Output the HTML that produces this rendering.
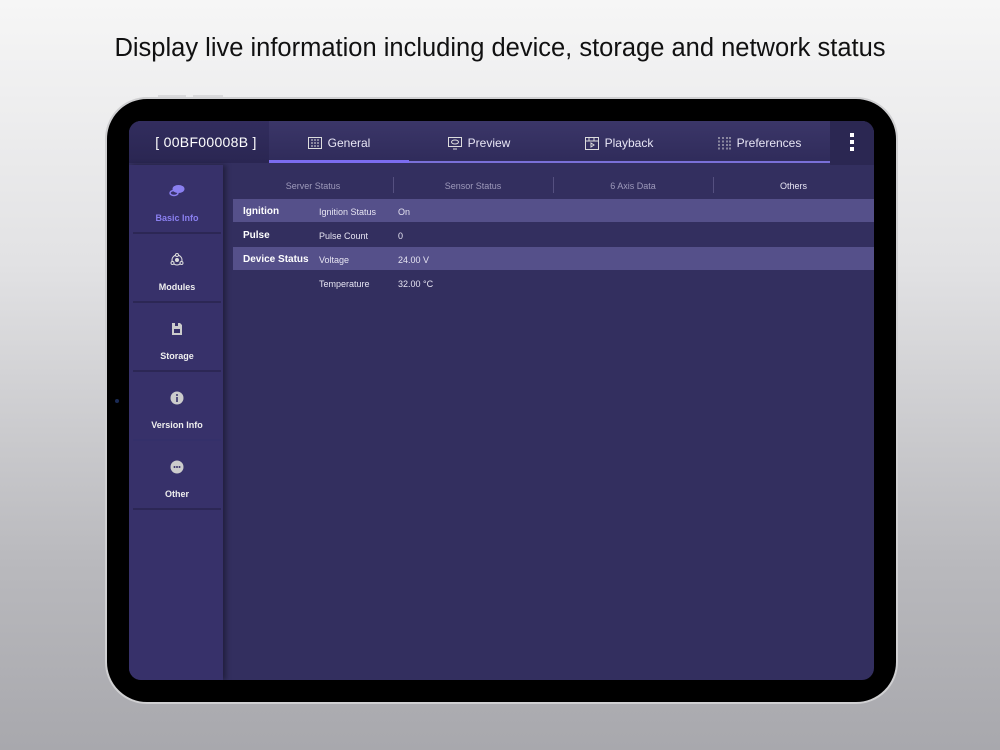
<!DOCTYPE html>
<html><head><meta charset="utf-8"><style>
*{margin:0;padding:0;box-sizing:border-box}
body{width:1000px;height:750px;overflow:hidden;background:linear-gradient(#f6f6f6 0%,#e2e2e4 35%,#b9b9bd 75%,#a8a8ad 100%);font-family:"Liberation Sans",sans-serif;position:relative}
.title{position:absolute;top:34px;left:0;width:1000px;text-align:center;font-size:25.5px;color:#111}
.dev{position:absolute;left:105px;top:97px;width:793px;height:607px;border-radius:42px;background:#000;border:2px solid #d0d0d2}
.btn{position:absolute;top:95px;height:2px;background:#dadadc}
.scr{position:absolute;left:129px;top:121px;width:745px;height:559px;border-radius:12px;overflow:hidden;background:#332f5f}
.hdr{position:absolute;left:0;top:0;width:745px;height:42px;background:linear-gradient(#3b3668,#2f2b5a)}
.id{position:absolute;left:0;top:0;width:140px;height:42px;background:linear-gradient(#322d5e,#2a2652);color:#fff;font-size:14px;padding-left:14px;text-align:center;line-height:43px;letter-spacing:.3px}
.tab{position:absolute;top:1px;height:42px;color:#e8e6f5;font-size:12px;display:flex;align-items:center;justify-content:center;gap:6px}
.ul{position:absolute;top:40px;height:2px;background:#8a7ff0}
.menu{position:absolute;left:701px;top:0;width:44px;height:44px;background:#2b2752}
.menu i{position:absolute;left:20px;width:4px;height:4px;background:#fff}
.side{position:absolute;left:0;top:44px;width:94px;height:515px;background:#37316a;box-shadow:3px 0 5px rgba(0,0,0,.35)}
.it{position:absolute;left:4px;width:88px;height:69px;border-bottom:2px solid #2c2755;text-align:center;color:#eee;font-size:9px;font-weight:bold}
.it .ic{position:absolute;top:18px;left:36px;width:16px;height:16px}
.it span{position:absolute;left:0;width:88px;top:48px}
.sub{position:absolute;top:53px;height:24px;line-height:24px;font-size:9px;color:#9e9abb;text-align:center}
.sep{position:absolute;top:56px;width:1px;height:16px;background:#555080}
.row{position:absolute;left:104px;width:641px;height:23px;font-size:9px;color:#e6e4f2;line-height:26px}
.row.h{background:#55508a}
.row b{position:absolute;left:10px;font-size:10px;color:#fff}
.row .k{position:absolute;left:86px}
.row .v{position:absolute;left:165px}
</style></head><body>
<div class="title">Display live information including device, storage and network status</div>
<div class="btn" style="left:158px;width:28px"></div><div class="btn" style="left:193px;width:30px"></div>
<div class="dev"></div>
<div style="position:absolute;left:115px;top:399px;width:4px;height:4px;border-radius:2px;background:#1a2a55"></div>
<div class="scr">
<div class="hdr"></div>
<div class="id">[ 00BF00008B ]</div>
<div class="tab" style="left:140px;width:140px"><svg width="14" height="12" viewBox="0 0 14 12"><rect x=".5" y=".5" width="13" height="11" fill="none" stroke="#ddd"/><path d="M3 3h8M3 6h8M3 9h8" stroke="#ddd" stroke-dasharray="2 1"/></svg>General</div>
<div class="tab" style="left:280px;width:140px"><svg width="14" height="13" viewBox="0 0 14 13"><rect x=".5" y=".5" width="13" height="9" fill="none" stroke="#ddd"/><ellipse cx="7" cy="5" rx="3.5" ry="2" fill="none" stroke="#ddd"/><path d="M5 12h4" stroke="#ddd"/></svg>Preview</div>
<div class="tab" style="left:420px;width:140px"><svg width="14" height="13" viewBox="0 0 14 13"><rect x=".5" y=".5" width="13" height="12" fill="none" stroke="#ddd"/><path d="M.5 4h13M4 .5v3.5M9 .5v3.5M6 6v4l3-2z" stroke="#ddd" fill="none"/></svg>Playback</div>
<div class="tab" style="left:560px;width:140px"><svg width="14" height="13" viewBox="0 0 14 13"><path d="M2 0v13M6 0v13M10 0v13M13 0v13" stroke="#ddd" stroke-dasharray="2 1.5"/></svg>Preferences</div>
<div class="ul" style="left:140px;width:561px;background:#7a70d8"></div>
<div class="ul" style="left:140px;width:140px;height:3px;top:39px;background:#7b6cf0"></div>
<div class="menu"><i style="top:12px"></i><i style="top:19px"></i><i style="top:26px"></i></div>
<div class="side">
<div class="it" style="top:0;color:#8a7ff0"><svg class="ic" viewBox="0 0 16 16"><ellipse cx="9.5" cy="6" rx="6" ry="4" fill="#8a7ff0"/><ellipse cx="5" cy="10" rx="4" ry="2.5" fill="none" stroke="#8a7ff0" stroke-width="1.5"/></svg><span>Basic Info</span></div>
<div class="it" style="top:69px"><svg class="ic" viewBox="0 0 16 16" fill="none" stroke="#ddd"><circle cx="8" cy="8" r="5"/><circle cx="8" cy="8" r="1.5" fill="#ddd"/><circle cx="8" cy="3" r="1.5" fill="#37316a"/><circle cx="3.5" cy="11" r="1.5" fill="#37316a"/><circle cx="12.5" cy="11" r="1.5" fill="#37316a"/></svg><span>Modules</span></div>
<div class="it" style="top:138px"><svg class="ic" viewBox="0 0 16 16"><path d="M3 2h8l2 2v10H3z" fill="#ccc"/><rect x="5" y="8" width="6" height="4" fill="#37316a"/><rect x="6" y="2" width="3" height="3" fill="#37316a"/></svg><span>Storage</span></div>
<div class="it" style="top:207px;border-bottom-color:#34306a"><svg class="ic" viewBox="0 0 16 16"><circle cx="8" cy="8" r="6.5" fill="#ccc"/><rect x="7.2" y="7" width="1.6" height="5" fill="#37316a"/><circle cx="8" cy="5" r="1" fill="#37316a"/></svg><span>Version Info</span></div>
<div class="it" style="top:276px"><svg class="ic" viewBox="0 0 16 16"><circle cx="8" cy="8" r="6.5" fill="#ccc"/><circle cx="5.5" cy="8" r="1" fill="#37316a"/><circle cx="8" cy="8" r="1" fill="#37316a"/><circle cx="10.5" cy="8" r="1" fill="#37316a"/></svg><span>Other</span></div>
</div>
<div class="sub" style="left:104px;width:160px">Server Status</div>
<div class="sep" style="left:264px"></div>
<div class="sub" style="left:264px;width:160px">Sensor Status</div>
<div class="sep" style="left:424px"></div>
<div class="sub" style="left:424px;width:160px">6 Axis Data</div>
<div class="sep" style="left:584px"></div>
<div class="sub" style="left:584px;width:161px;color:#e8e6f5">Others</div>
<div class="row h" style="top:78px"><b>Ignition</b><span class="k">Ignition Status</span><span class="v">On</span></div>
<div class="row" style="top:102px"><b>Pulse</b><span class="k">Pulse Count</span><span class="v">0</span></div>
<div class="row h" style="top:126px"><b>Device Status</b><span class="k">Voltage</span><span class="v">24.00 V</span></div>
<div class="row" style="top:150px"><span class="k">Temperature</span><span class="v">32.00 °C</span></div>
</div>
</body></html>
